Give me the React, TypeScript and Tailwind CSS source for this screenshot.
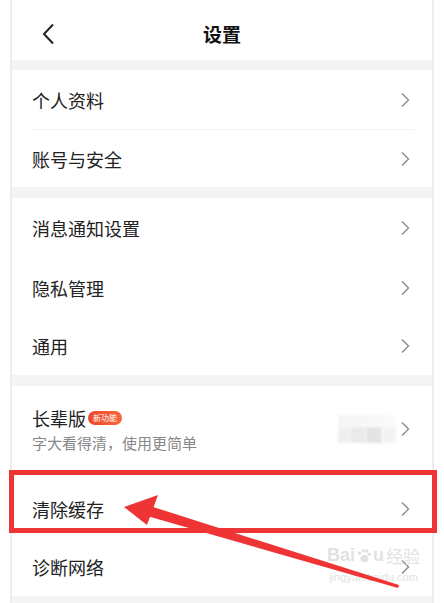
import { ReactNode } from "react";

const font = { fontFamily: '"Noto Sans CJK SC", "Noto Sans", sans-serif' };

function Chevron() {
  return (
    <svg width="10" height="16" viewBox="0 0 10 16" className="shrink-0">
      <path d="M2 1.5 L8.5 8 L2 14.5" fill="none" stroke="#8a8a8a" strokeWidth="1.4" />
    </svg>
  );
}

function Row({ label, h = "h-[59px]", extra, className = "" }: { label: ReactNode; h?: string; extra?: ReactNode; className?: string }) {
  return (
    <div className={`${h} flex items-center justify-between pl-[20px] pr-[22px] bg-white ${className}`}>
      <div className="text-[18px] text-[#222] leading-none">{label}</div>
      <div className="flex items-center">
        {extra}
        <Chevron />
      </div>
    </div>
  );
}

function Band({ h = "h-[11px]" }: { h?: string }) {
  return <div className={`${h} bg-[#f4f4f4]`} />;
}

export default function App() {
  return (
    <div className="w-[444px] h-[603px] bg-white overflow-hidden relative" style={font}>
      <div className="mx-[10px] h-full border-x-2 border-[#eeeeee] flex flex-col">
        <div className="h-[60px] flex items-center relative shrink-0">
          <svg width="16" height="22" viewBox="0 0 16 22" className="absolute left-[29px] top-[23px]">
            <path d="M12 1.5 L3 11 L12 20.5" fill="none" stroke="#222" strokeWidth="2" />
          </svg>
          <div className="w-full text-center text-[19px] font-bold text-[#111] pt-[8px]">设置</div>
        </div>
        <Band h="h-[10px]" />
        <Row label="个人资料" />
        <div className="h-px bg-[#f3f3f3] mx-[18px]" />
        <Row label="账号与安全" h="h-[57px]" />
        <Band />
        <Row label="消息通知设置" h="h-[60px]" />
        <Row label="隐私管理" />
        <Row label="通用" h="h-[58px]" />
        <Band />
        <div className="h-[86px] flex items-center justify-between pl-[20px] pr-[22px] bg-white">
          <div className="flex flex-col">
            <div className="flex items-center">
              <span className="text-[18px] text-[#222] leading-none">长辈版</span>
              <span className="ml-[2px] px-[5px] h-[14px] rounded-full bg-gradient-to-r from-[#f0462e] to-[#f4683a] text-white text-[8px] leading-[14px]">
                新功能
              </span>
            </div>
            <div className="mt-[8px] text-[15px] text-[#888] leading-none">字大看得清，使用更简单</div>
          </div>
          <div className="flex items-center">
            <div className="flex flex-col mr-[4px] opacity-80">
              <div className="w-[58px] h-[12px] bg-gradient-to-r from-[#f2f2f2] to-[#fafafa] blur-[1px]" />
              <div className="flex">
                <div className="w-[12px] h-[16px] bg-[#ececec] blur-[1px]" />
                <div className="w-[16px] h-[16px] bg-[#e6e6e6] blur-[1px]" />
                <div className="w-[16px] h-[16px] bg-[#dedede] blur-[1px]" />
                <div className="w-[14px] h-[16px] bg-[#f1f1f1] blur-[1px]" />
              </div>
            </div>
            <Chevron />
          </div>
        </div>
        <Row label="清除缓存" h="h-[66px]" className="pt-[8px]" />
        <Row label="诊断网络" h="h-[58px]" />
        <Band h="flex-1" />
      </div>

      {/* red highlight box */}
      <div className="absolute left-[9px] top-[470px] w-[428px] h-[63px] border-[5px] border-[#ee3434]" />

      {/* watermark */}
      <div className="absolute left-[327px] top-[546px] flex flex-col items-center text-[#e2e2e2] select-none">
        <div className="flex items-end text-[18px] leading-none font-bold" style={{ fontFamily: '"Liberation Sans", sans-serif' }}>
          <span>Bai</span>
          <svg width="16" height="16" viewBox="0 0 18 18" className="mx-[1px]">
            <circle cx="4" cy="6" r="2" fill="#e2e2e2" />
            <circle cx="8" cy="3" r="2" fill="#e2e2e2" />
            <circle cx="12" cy="3.5" r="2" fill="#e2e2e2" />
            <circle cx="15" cy="7" r="2" fill="#e2e2e2" />
            <ellipse cx="9.5" cy="12" rx="4.5" ry="4" fill="#e2e2e2" />
          </svg>
          <span>u</span>
          <span className="ml-[2px] text-[17px] font-normal" style={font}>经验</span>
        </div>
        <div className="text-[11px] leading-none mt-[8px]" style={{ fontFamily: '"Liberation Sans", sans-serif' }}>
          jingyan.baidu.com
        </div>
      </div>

      {/* arrow */}
      <svg className="absolute left-0 top-0 pointer-events-none" width="444" height="603" viewBox="0 0 444 603">
        <polygon points="124,507 158,495 147,525" fill="#ee3434" />
        <polygon points="150,506 147,516 398,588 399,585" fill="#ee3434" />
      </svg>
    </div>
  );
}
